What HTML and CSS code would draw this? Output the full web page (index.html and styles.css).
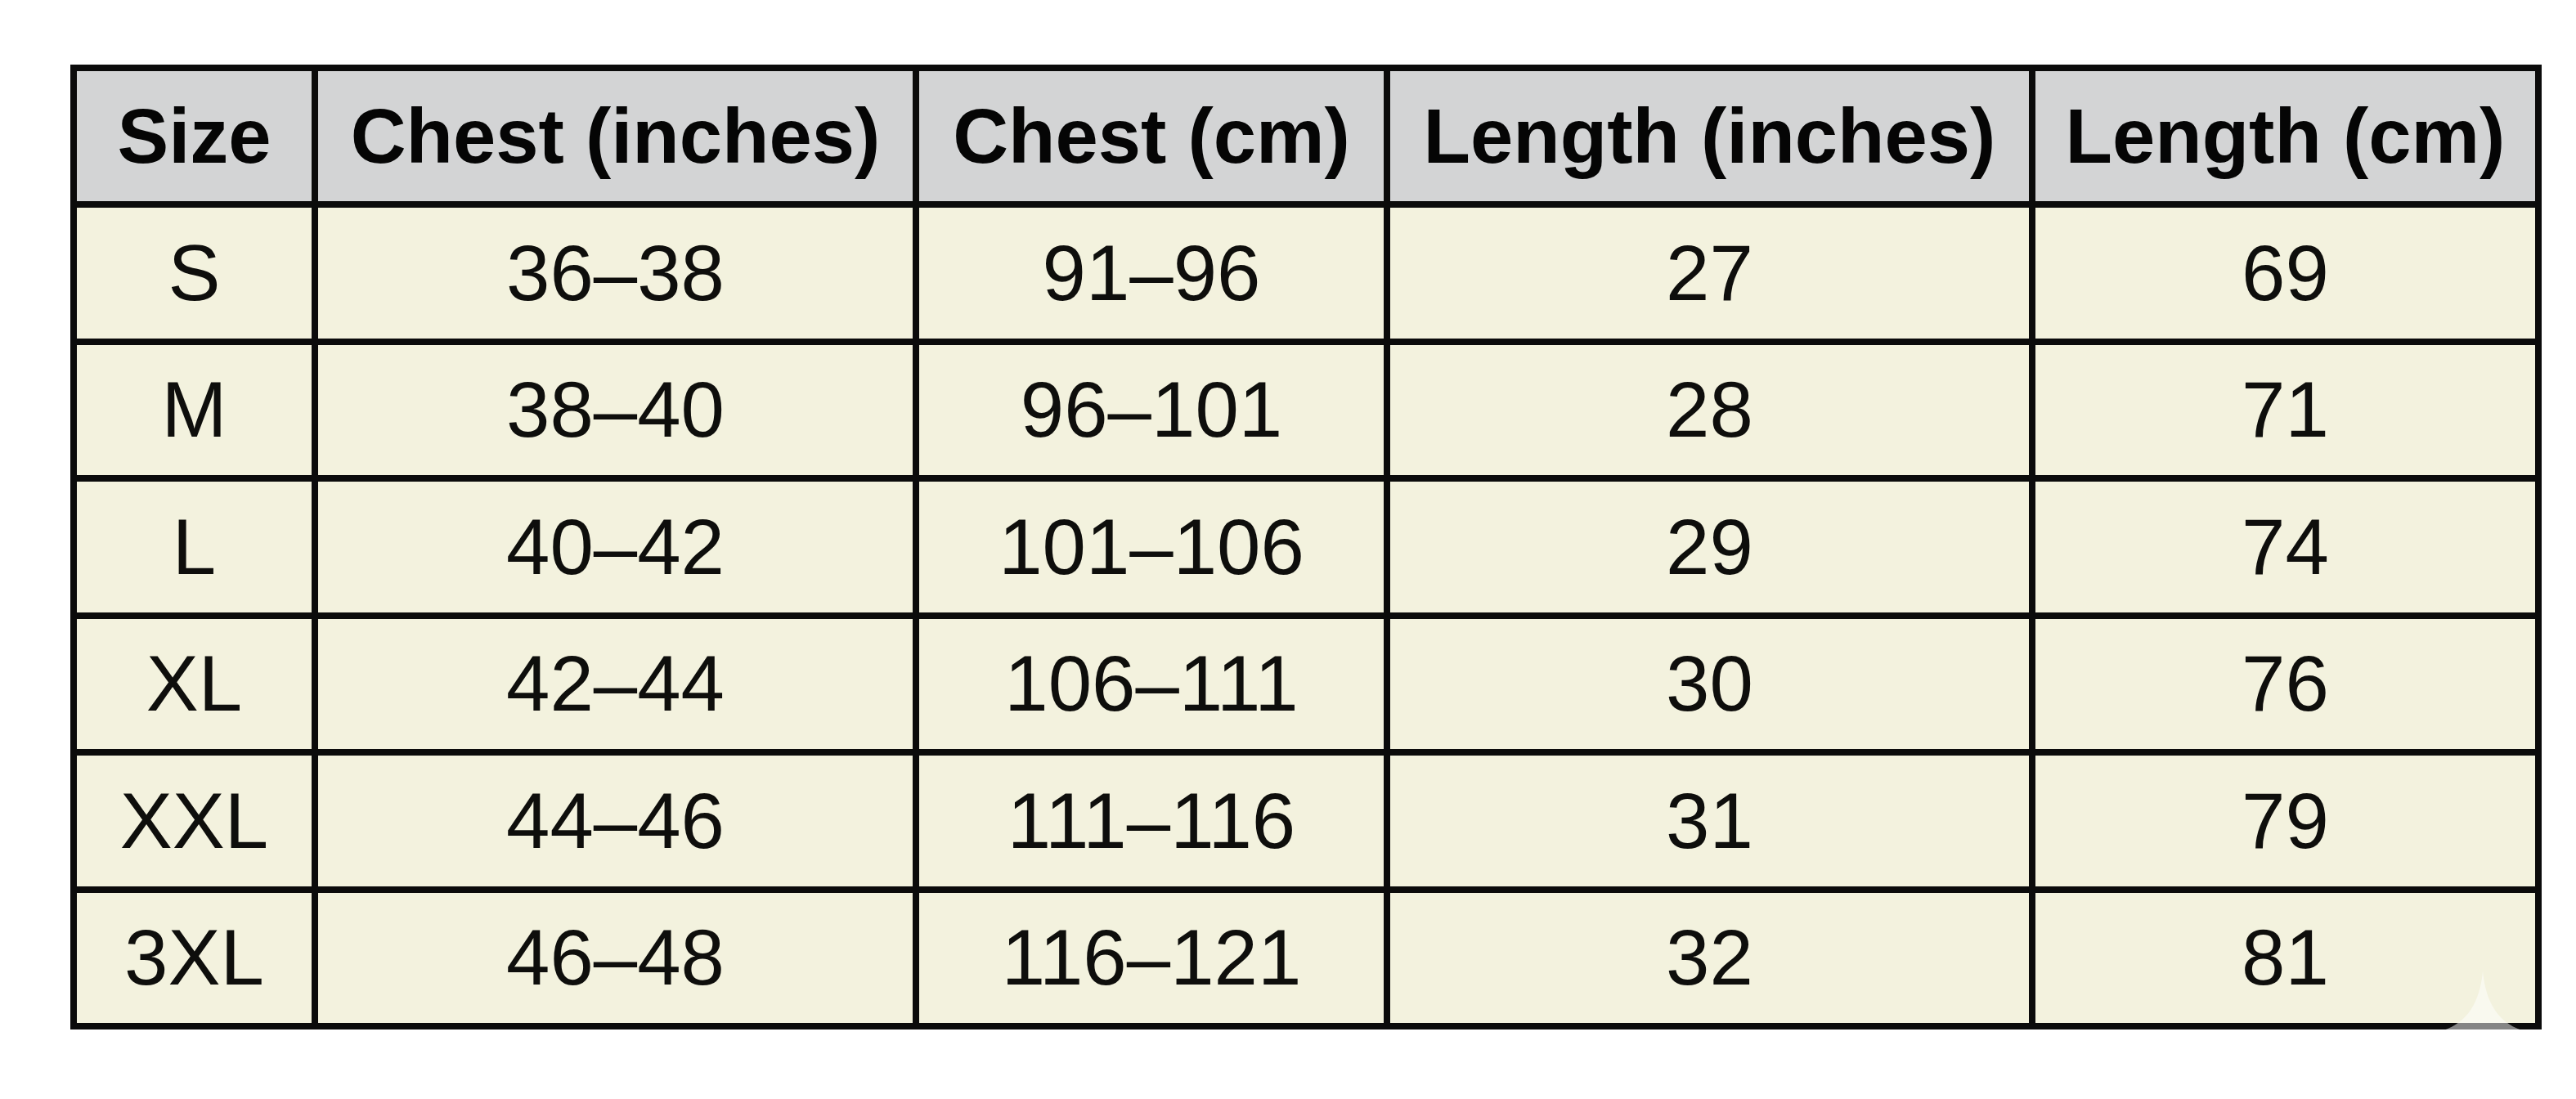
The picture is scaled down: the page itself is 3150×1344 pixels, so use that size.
FILE: index.html
```html
<!DOCTYPE html>
<html lang="en">
<head>
<meta charset="utf-8">
<title>Size Chart</title>
<link rel="stylesheet" href="styles.css">
</head>
<body>
<main class="page">
  <div class="chart">
    <div class="grid">
      <div class="cell head">Size</div>
      <div class="cell head">Chest (inches)</div>
      <div class="cell head">Chest (cm)</div>
      <div class="cell head">Length (inches)</div>
      <div class="cell head">Length (cm)</div>

      <div class="cell">S</div>
      <div class="cell">36–38</div>
      <div class="cell">91–96</div>
      <div class="cell">27</div>
      <div class="cell">69</div>

      <div class="cell">M</div>
      <div class="cell">38–40</div>
      <div class="cell">96–101</div>
      <div class="cell">28</div>
      <div class="cell">71</div>

      <div class="cell">L</div>
      <div class="cell">40–42</div>
      <div class="cell">101–106</div>
      <div class="cell">29</div>
      <div class="cell">74</div>

      <div class="cell">XL</div>
      <div class="cell">42–44</div>
      <div class="cell">106–111</div>
      <div class="cell">30</div>
      <div class="cell">76</div>

      <div class="cell">XXL</div>
      <div class="cell">44–46</div>
      <div class="cell">111–116</div>
      <div class="cell">31</div>
      <div class="cell">79</div>

      <div class="cell">3XL</div>
      <div class="cell">46–48</div>
      <div class="cell">116–121</div>
      <div class="cell">32</div>
      <div class="cell">81</div>
    </div>
    <svg class="sparkle" viewBox="0 0 100 150" aria-hidden="true">
      <path d="M50 0 C54 40 70 65 100 75 C70 85 54 110 50 150 C46 110 30 85 0 75 C30 65 46 40 50 0 Z"/>
    </svg>
  </div>
</main>
</body>
</html>
```

FILE: styles.css
```css
html, body {
  margin: 0;
  padding: 0;
  background: #ffffff;
}

.page {
  padding: 79px 0 0 86px;
  width: 3150px;
  height: 1344px;
  box-sizing: border-box;
}

.chart {
  position: relative;
  width: 3022px;
}

.grid {
  display: grid;
  grid-template-columns: 287px 727px 568px 781px 611px;
  grid-template-rows: 159px repeat(6, 159.5px);
  gap: 8px;
  padding: 8px;
  background: #0b0b0b;
  font-family: "Liberation Sans", Arial, Helvetica, sans-serif;
  color: #0e0e0c;
}

.cell {
  display: flex;
  align-items: center;
  justify-content: center;
  background: #f3f2de;
  font-size: 96px;
  line-height: 1;
  white-space: nowrap;
}

.head {
  background: #d3d4d5;
  font-size: 94px;
  font-weight: 700;
  color: #050505;
}

.sparkle {
  position: absolute;
  left: 2902px;
  top: 1106px;
  width: 96px;
  height: 150px;
  fill: rgba(255, 255, 255, 0.5);
}
```
